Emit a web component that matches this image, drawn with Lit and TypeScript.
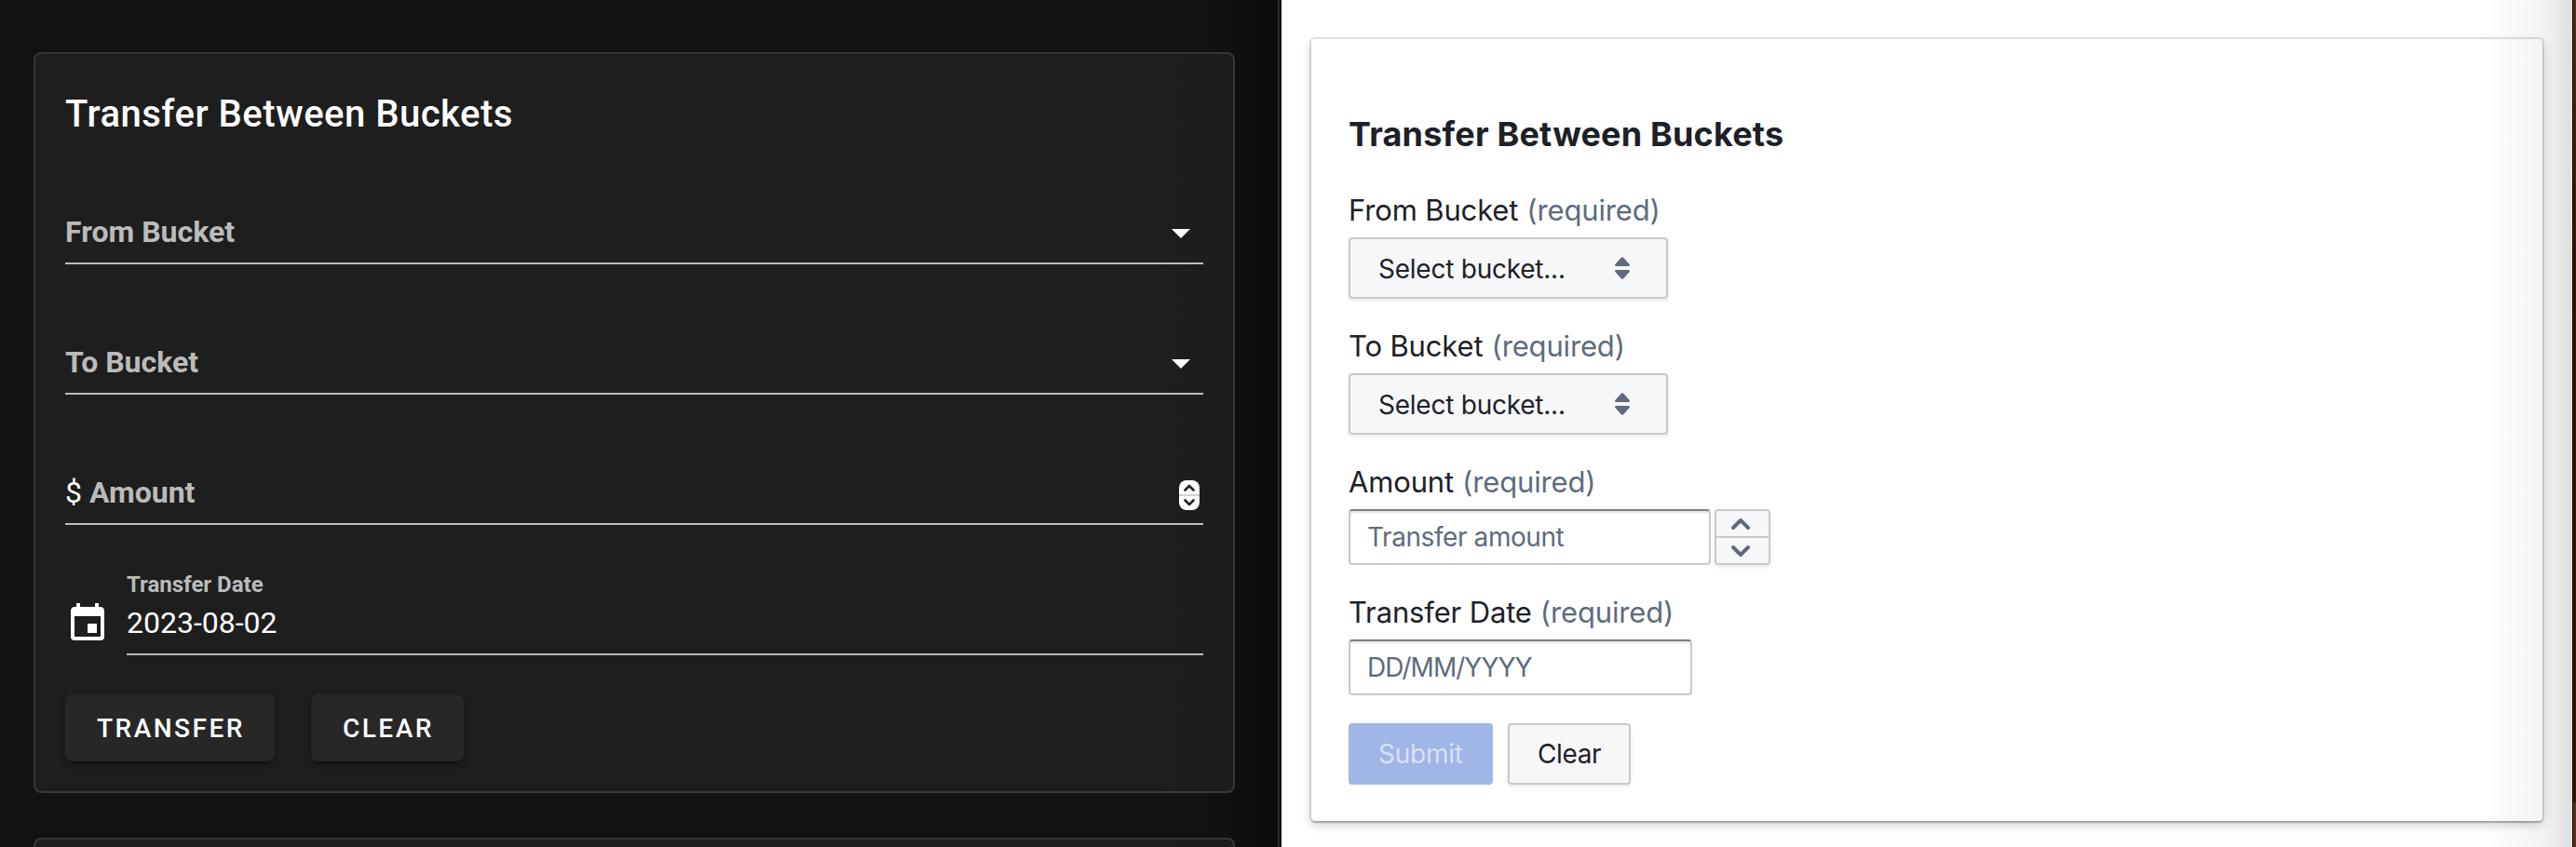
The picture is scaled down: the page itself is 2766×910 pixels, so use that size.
import { LitElement, html, css, svg } from "lit";
import { customElement, property } from "lit/decorators.js";

const calendar = svg`<path fill="#fff" d="M19,19H5V8H19M16,1V3H8V1H6V3H5C3.89,3 3,3.89 3,5V19A2,2 0 0,0 5,21H19A2,2 0 0,0 21,19V5C21,3.89 20.1,3 19,3H18V1M17,12H12V17H17V12Z"/>`;

@customElement("dark-form")
class DarkForm extends LitElement {
  static styles = css`
    :host { display: block; box-sizing: border-box; width: 1376px; height: 910px; padding: 56px 46px 0 36px; overflow: hidden;
      background: linear-gradient(90deg, transparent 1290px, rgba(0,0,0,.38) 1372px), #121212;
      border-right: 2px solid #000; box-shadow: inset -2px 0 #292929;
      font-family: Roboto, sans-serif; color: #fff; }
    .card { box-sizing: border-box; width: 1290px; height: 796px; border: 2px solid #363636; border-radius: 8px; padding: 42px 32px 0;
      background: linear-gradient(90deg, #1e1e1e 1210px, #1c1c1c); }
    .next { margin-top: 48px; }
    h2 { margin: 0; font-size: 40px; line-height: 46px; font-weight: 500; letter-spacing: .5px; }
    .field { box-sizing: border-box; display: flex; align-items: center; justify-content: space-between; height: 84px; margin-top: 56px; border-bottom: 2px solid #bcbcbc; padding-top: 20px; }
    h2 + .field { margin-top: 54px; }
    .label { font-size: 32px; font-weight: 700; color: #bbb; line-height: 40px; padding-bottom: 4px; }
    .dollar { color: #fff; font-weight: 400; margin-right: 8px; }
    .arrow { width: 20px; height: 10px; margin-right: 14px; background: #fff; clip-path: polygon(0 0, 100% 0, 50% 100%); }
    .spin { width: 22px; height: 32px; margin: 2px 4px 0 0; display: block; }
    .daterow { display: flex; margin-top: 56px; height: 84px; }
    .icon { width: 48px; height: 48px; margin-top: 26px; margin-right: 18px; }
    .date { flex: 1; box-sizing: border-box; border-bottom: 2px solid #bcbcbc; }
    .small { font-size: 24px; font-weight: 700; color: #bbb; line-height: 28px; margin-top: -6px; }
    .value { font-size: 32px; line-height: 38px; margin-top: 8px; }
    .actions { display: flex; gap: 39px; margin-top: 42px; }
    .btn { height: 72px; box-sizing: border-box; padding: 0 32px 0 34px; border-radius: 8px; background: #272727; font-size: 28px; font-weight: 500; letter-spacing: 2.5px; line-height: 73px;
      box-shadow: 0 6px 2px -4px rgba(0,0,0,.2), 0 4px 4px rgba(0,0,0,.14), 0 2px 10px rgba(0,0,0,.12); }
  `;
  render() {
    return html`
      <section class="card">
        <h2>Transfer Between Buckets</h2>
        <div class="field"><span class="label">From Bucket</span><i class="arrow"></i></div>
        <div class="field"><span class="label">To Bucket</span><i class="arrow"></i></div>
        <div class="field"><span class="label"><span class="dollar">$</span>Amount</span>
          <svg class="spin" viewBox="0 0 22 32"><rect width="22" height="32" rx="8" fill="#fff"/><path d="M0 16h22" stroke="#d2d2d2" stroke-width="2"/><path d="M6.500 10.500L11 6l4.500 4.500M6.500 21.500L11 26l4.500-4.500" fill="none" stroke="#222" stroke-width="2.600" stroke-linecap="round" stroke-linejoin="round"/></svg>
        </div>
        <div class="daterow">
          <svg class="icon" viewBox="0 0 24 24">${calendar}</svg>
          <div class="date"><div class="small">Transfer Date</div><div class="value">2023-08-02</div></div>
        </div>
        <div class="actions"><div class="btn">TRANSFER</div><div class="btn">CLEAR</div></div>
      </section>
      <section class="card next"></section>`;
  }
}

@customElement("light-label")
class LightLabel extends LitElement {
  @property() text = "";
  static styles = css`
    :host { display: block; height: 40px; line-height: 40px; font-size: 31px; letter-spacing: -.15px; color: #1c2127; white-space: nowrap; }
    .req { color: #5f6b7c; margin-left: .5px; }
  `;
  render() { return html`<span>${this.text}</span> <span class="req">(required)</span>`; }
}

@customElement("light-form")
class LightForm extends LitElement {
  static styles = css`
    :host { display: block; box-sizing: border-box; width: 1390px; height: 910px; padding: 42px 36px 0 32px; overflow: hidden; background: #fff;
      border-right: 3px solid #46150c; border-image: linear-gradient(#5c2618, #3f0f08 30%, #3f0f08 860px, #632d14 862px) 1;
      border-image-width: 0 3px 0 0; box-shadow: inset -1px 0 #000; font-family: Inter, sans-serif; position: relative; }
    .shade { position: absolute; inset: 0 0 0 auto; width: 96px; box-sizing: border-box; border-right: 1px solid #000; background: linear-gradient(90deg, transparent, rgba(0,0,0,.045) 65%, rgba(0,0,0,.13)); }
    .card { box-sizing: border-box; width: 1322px; height: 840px; padding: 82px 40px 0; border-radius: 4px; background: #fff;
      box-shadow: 0 0 0 2px rgba(17,20,24,.1), 0 2px 2px rgba(17,20,24,.2), 0 4px 12px rgba(17,20,24,.2); }
    h2 { margin: 0; font-size: 36px; line-height: 40px; font-weight: 700; letter-spacing: .18px; color: #1c2127; }
    .group { display: flex; flex-direction: column; align-items: flex-start; }
    light-label { margin-bottom: 9px; }
    .box { box-sizing: border-box; border: 2px solid #c7c9cb; border-radius: 4px; background: #f6f7f9; font-size: 28px; color: #1c2127; box-shadow: 0 2px 4px rgba(17,20,24,.1); }
    .select { display: flex; justify-content: space-between; align-items: center; width: 343px; height: 66px; padding: 0 39px 0 30px; letter-spacing: -.24px; }
    .select span { padding-top: 2px; }
    .sort { width: 16px; height: 24px; }
    .input { box-sizing: border-box; height: 60px; line-height: 57px; border-radius: 4px; padding: 0 18px; font-size: 28px; color: #5f6b7c;
      border: 2px solid #c9cacb; border-top-color: #7e8083; box-shadow: inset 0 2px 2px rgba(17,20,24,.12); }
    .amount { width: 389px; letter-spacing: -.42px; }
    .date { width: 369px; letter-spacing: -.95px; }
    .row { display: flex; gap: 4px; }
    .step { width: 60px; height: 60px; display: grid; }
    .step svg { width: 56px; height: 56px; }
    .actions { display: flex; gap: 16px; margin-top: 30px; }
    .submit { box-sizing: border-box; width: 155px; height: 66px; padding-left: 32px; line-height: 67px; border-radius: 4px; background: #a0b6e6; color: rgba(255,255,255,.6); font-size: 28px; letter-spacing: -.25px; }
    .clear { width: 132px; height: 66px; padding-left: 30px; line-height: 63px; letter-spacing: -.4px; }
    .g1 { margin-top: 42px; }
    .g2, .g3, .g4 { margin-top: 31px; }
  `;
  private select() {
    return html`<div class="box select"><span>Select bucket...</span>
      <svg class="sort" viewBox="0 0 16 24"><path d="M1.500 10h13c1.300 0 1.900-1.400 1-2.300L9.200.8a1.700 1.700 0 0 0-2.400 0L.5 7.700C-.4 8.600.2 10 1.500 10zM1.500 14h13c1.300 0 1.900 1.400 1 2.300l-6.300 6.900a1.700 1.700 0 0 1-2.400 0L.5 16.300C-.4 15.400.2 14 1.500 14z" fill="#5f6b7c"/></svg></div>`;
  }
  render() {
    return html`
      <section class="card">
        <h2>Transfer Between Buckets</h2>
        <div class="group g1"><light-label text="From Bucket"></light-label>${this.select()}</div>
        <div class="group g2"><light-label text="To Bucket"></light-label>${this.select()}</div>
        <div class="group g3"><light-label text="Amount"></light-label>
          <div class="row"><div class="input amount">Transfer amount</div>
            <div class="box step"><svg viewBox="0 0 56 56"><path d="M0 28h56" stroke="#c7c9cb" stroke-width="2"/><path d="M18 18l8-8 8 8M18 39l8 8 8-8" fill="none" stroke="#5f6b7c" stroke-width="4" stroke-linecap="round" stroke-linejoin="round"/></svg></div>
          </div></div>
        <div class="group g4"><light-label text="Transfer Date"></light-label><div class="input date">DD/MM/YYYY</div></div>
        <div class="actions"><div class="submit">Submit</div><div class="box clear">Clear</div></div>
      </section>
      <div class="shade"></div>`;
  }
}

@customElement("app-root")
class AppRoot extends LitElement {
  static styles = css`:host { display: flex; width: 2766px; height: 910px; overflow: hidden; }`;
  render() { return html`<dark-form></dark-form><light-form></light-form>`; }
}
